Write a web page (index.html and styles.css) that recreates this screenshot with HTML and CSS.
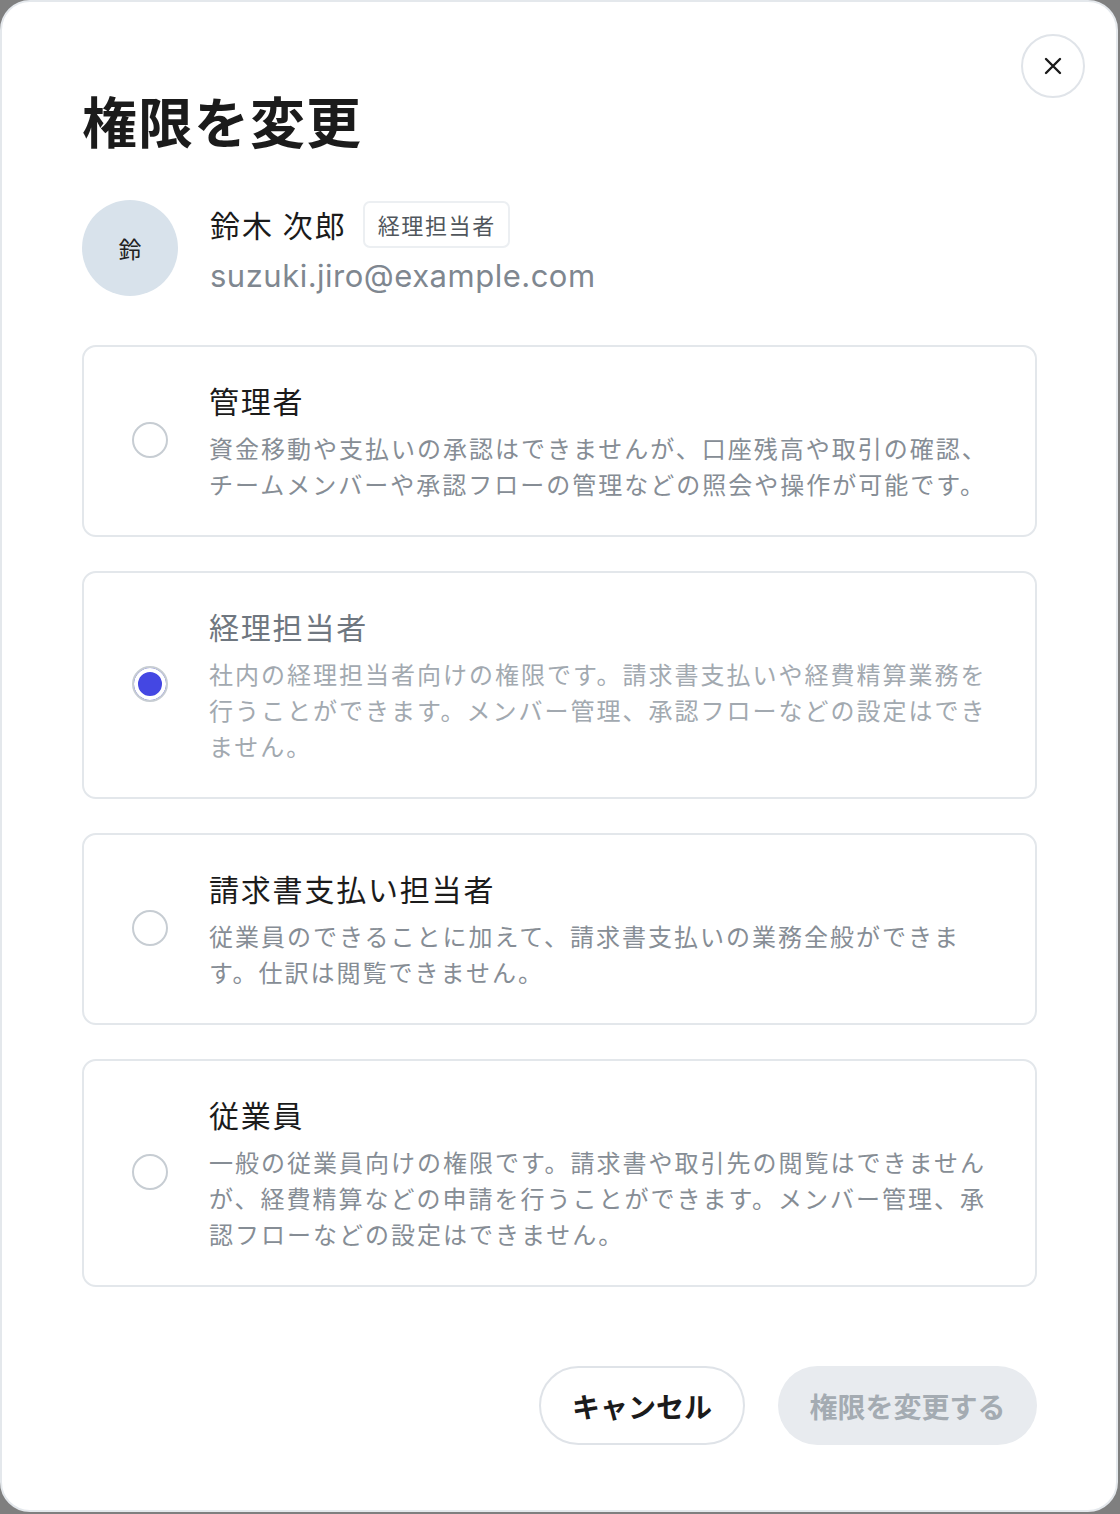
FILE: index.html
```html
<!DOCTYPE html>
<html lang="ja">
<head>
<meta charset="utf-8">
<title>権限を変更</title>
<link rel="stylesheet" href="styles.css">
</head>
<body>
<div class="dialog">
  <button class="close" aria-label="閉じる">
    <svg width="20" height="20" viewBox="0 0 20 20" fill="none" stroke="#1b1b1b" stroke-width="2.4" stroke-linecap="round"><path d="M3 3L17 17M17 3L3 17"/></svg>
  </button>
  <h1 class="title">権限を変更</h1>

  <div class="user">
    <div class="avatar">鈴</div>
    <div class="user-info">
      <div class="name-row">
        <span class="name">鈴木 次郎</span>
        <span class="badge">経理担当者</span>
      </div>
      <div class="email">suzuki.jiro@example.com</div>
    </div>
  </div>

  <div class="options">
    <label class="option">
      <span class="radio"></span>
      <span class="option-text">
        <span class="option-title">管理者</span>
        <span class="option-desc">資金移動や支払いの承認はできませんが、口座残高や取引の確認、チームメンバーや承認フローの管理などの照会や操作が可能です。</span>
      </span>
    </label>
    <label class="option option-current">
      <span class="radio radio-checked"></span>
      <span class="option-text">
        <span class="option-title">経理担当者</span>
        <span class="option-desc">社内の経理担当者向けの権限です。請求書支払いや経費精算業務を行うことができます。メンバー管理、承認フローなどの設定はできません。</span>
      </span>
    </label>
    <label class="option">
      <span class="radio"></span>
      <span class="option-text">
        <span class="option-title">請求書支払い担当者</span>
        <span class="option-desc">従業員のできることに加えて、請求書支払いの業務全般ができます。仕訳は閲覧できません。</span>
      </span>
    </label>
    <label class="option">
      <span class="radio"></span>
      <span class="option-text">
        <span class="option-title">従業員</span>
        <span class="option-desc">一般の従業員向けの権限です。請求書や取引先の閲覧はできませんが、経費精算などの申請を行うことができます。メンバー管理、承認フローなどの設定はできません。</span>
      </span>
    </label>
  </div>

  <div class="actions">
    <button class="btn btn-cancel">キャンセル</button>
    <button class="btn btn-primary" disabled>権限を変更する</button>
  </div>
</div>
</body>
</html>
```

FILE: styles.css
```css
* { box-sizing: border-box; }
html, body { margin: 0; padding: 0; }
body {
  background: #7f7f7f;
  width: 1120px;
  height: 1514px;
  font-family: "Noto Sans CJK JP", "Noto Sans", sans-serif;
  color: #1b1b1b;
}
.dialog {
  position: relative;
  width: 1118px;
  height: 1512px;
  background: #ffffff;
  border: 2px solid #e4e8ec;
  border-radius: 30px;
  padding: 85px 79px 65px 80px;
  display: flex;
  flex-direction: column;
}
.close {
  position: absolute;
  top: 32px;
  right: 31px;
  width: 64px;
  height: 64px;
  border-radius: 50%;
  border: 2px solid #e0e4e9;
  background: #fff;
  display: flex;
  align-items: center;
  justify-content: center;
  padding: 0;
}
.title {
  margin: 0;
  font-size: 55px;
  line-height: 64px;
  font-weight: 700;
  letter-spacing: 1px;
  color: #1b1b1b;
}
.user {
  margin-top: 49px;
  display: flex;
  align-items: center;
  gap: 32px;
}
.avatar {
  width: 96px;
  height: 96px;
  border-radius: 50%;
  background: #d8e2eb;
  display: flex;
  align-items: center;
  justify-content: center;
  font-size: 23px;
  color: #222;
}
.user-info {
  display: flex;
  flex-direction: column;
  gap: 8px;
}
.name-row {
  display: flex;
  align-items: center;
  gap: 16px;
}
.name {
  font-size: 30px;
  line-height: 40px;
  letter-spacing: 2px;
  color: #1b1b1b;
}
.badge {
  height: 47px;
  display: flex;
  align-items: center;
  padding: 0 12px 0 13px;
  border: 2px solid #eceff2;
  border-radius: 7px;
  font-size: 22px;
  letter-spacing: 1.6px;
  color: #50565c;
}
.email {
  font-family: "Inter", "Liberation Sans", sans-serif;
  font-size: 31px;
  line-height: 40px;
  letter-spacing: 0.5px;
  color: #7f8790;
}
.options {
  margin-top: 49px;
  display: flex;
  flex-direction: column;
  gap: 34px;
}
.option {
  display: flex;
  align-items: center;
  gap: 41px;
  border: 2px solid #e3e7eb;
  border-radius: 14px;
  padding: 31px 40px 33px 48px;
}
.radio {
  flex: none;
  width: 36px;
  height: 36px;
  border-radius: 50%;
  border: 2px solid #c7cdd3;
  background: #fff;
}
.radio-checked {
  background: #4447e3;
  box-shadow: inset 0 0 0 4px #fff;
}
.option-text {
  display: flex;
  flex-direction: column;
  gap: 8px;
  min-width: 0;
}
.option-title {
  font-size: 30px;
  line-height: 44px;
  letter-spacing: 1.8px;
  color: #1b1b1b;
}
.option-desc {
  font-size: 24px;
  line-height: 36px;
  letter-spacing: 2px;
  color: #868d95;
}
.option-current .option-title { color: #6f7780; }
.option-current .option-desc { color: #a2a9b0; }
.actions {
  margin-top: auto;
  display: flex;
  justify-content: flex-end;
  gap: 33px;
}
.btn {
  height: 79px;
  border-radius: 40px;
  font-family: "Noto Sans CJK JP", sans-serif;
  font-size: 28px;
  font-weight: 700;
  padding: 0;
}
.btn-cancel {
  width: 206px;
  background: #fff;
  border: 2px solid #dfe3e8;
  color: #1b1b1b;
}
.btn-primary {
  width: 259px;
  background: #e8ebef;
  border: none;
  color: #a4abb2;
}
```
